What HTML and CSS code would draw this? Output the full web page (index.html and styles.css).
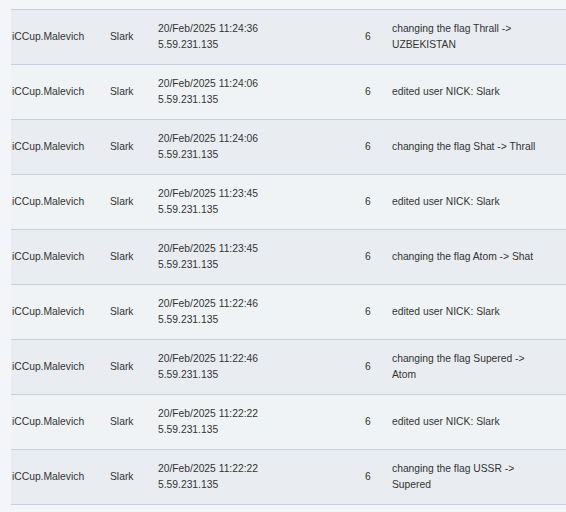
FILE: index.html
```html
<!DOCTYPE html>
<html>
<head>
<meta charset="utf-8">
<link rel="stylesheet" href="styles.css">
</head>
<body>
<div class="wrap">
<table class="log">
<colgroup><col class="c-user"><col class="c-hero"><col class="c-date"><col class="c-num"><col class="c-desc"></colgroup>
<tbody>
<tr class="odd"><td class="user">iCCup.Malevich</td><td>Slark</td><td>20/Feb/2025 11:24:36<br>5.59.231.135</td><td class="num">6</td><td class="desc">changing the flag Thrall -&gt; UZBEKISTAN</td></tr>
<tr class="even"><td class="user">iCCup.Malevich</td><td>Slark</td><td>20/Feb/2025 11:24:06<br>5.59.231.135</td><td class="num">6</td><td class="desc">edited user NICK: Slark</td></tr>
<tr class="odd"><td class="user">iCCup.Malevich</td><td>Slark</td><td>20/Feb/2025 11:24:06<br>5.59.231.135</td><td class="num">6</td><td class="desc">changing the flag Shat -&gt; Thrall</td></tr>
<tr class="even"><td class="user">iCCup.Malevich</td><td>Slark</td><td>20/Feb/2025 11:23:45<br>5.59.231.135</td><td class="num">6</td><td class="desc">edited user NICK: Slark</td></tr>
<tr class="odd"><td class="user">iCCup.Malevich</td><td>Slark</td><td>20/Feb/2025 11:23:45<br>5.59.231.135</td><td class="num">6</td><td class="desc">changing the flag Atom -&gt; Shat</td></tr>
<tr class="even"><td class="user">iCCup.Malevich</td><td>Slark</td><td>20/Feb/2025 11:22:46<br>5.59.231.135</td><td class="num">6</td><td class="desc">edited user NICK: Slark</td></tr>
<tr class="odd"><td class="user">iCCup.Malevich</td><td>Slark</td><td>20/Feb/2025 11:22:46<br>5.59.231.135</td><td class="num">6</td><td class="desc">changing the flag Supered -&gt; Atom</td></tr>
<tr class="even"><td class="user">iCCup.Malevich</td><td>Slark</td><td>20/Feb/2025 11:22:22<br>5.59.231.135</td><td class="num">6</td><td class="desc">edited user NICK: Slark</td></tr>
<tr class="odd"><td class="user">iCCup.Malevich</td><td>Slark</td><td>20/Feb/2025 11:22:22<br>5.59.231.135</td><td class="num">6</td><td class="desc">changing the flag USSR -&gt; Supered</td></tr>
</tbody>
</table>
</div>
</body>
</html>
```

FILE: styles.css
```css
html, body {
  margin: 0;
  padding: 0;
  background: #f3f5f8;
  overflow: hidden;
}
.wrap {
  padding: 9px 0 0 11px;
  width: 600px;
}
.log {
  border-collapse: collapse;
  table-layout: fixed;
  width: 589px;
  font-family: "Liberation Sans", Arial, sans-serif;
  font-size: 10.3px;
  line-height: 16px;
  color: #333;
}
.c-user { width: 99px; }
.c-hero { width: 48px; }
.c-date { width: 200px; }
.c-num { width: 34px; }
.c-desc { width: 208px; }
.log td {
  height: 54px;
  padding: 0;
  vertical-align: middle;
  border-top: 1px solid #c9d0d9;
  border-bottom: 1px solid #c9d0d9;
  white-space: nowrap;
}
.log td.user {
  padding-left: 1px;
}
.log td.desc {
  white-space: normal;
  padding-right: 58px;
}
.log td.num {
  padding-left: 7px;
}
.odd td { background: #e9edf1; }
.even td { background: #f0f3f6; }
```
